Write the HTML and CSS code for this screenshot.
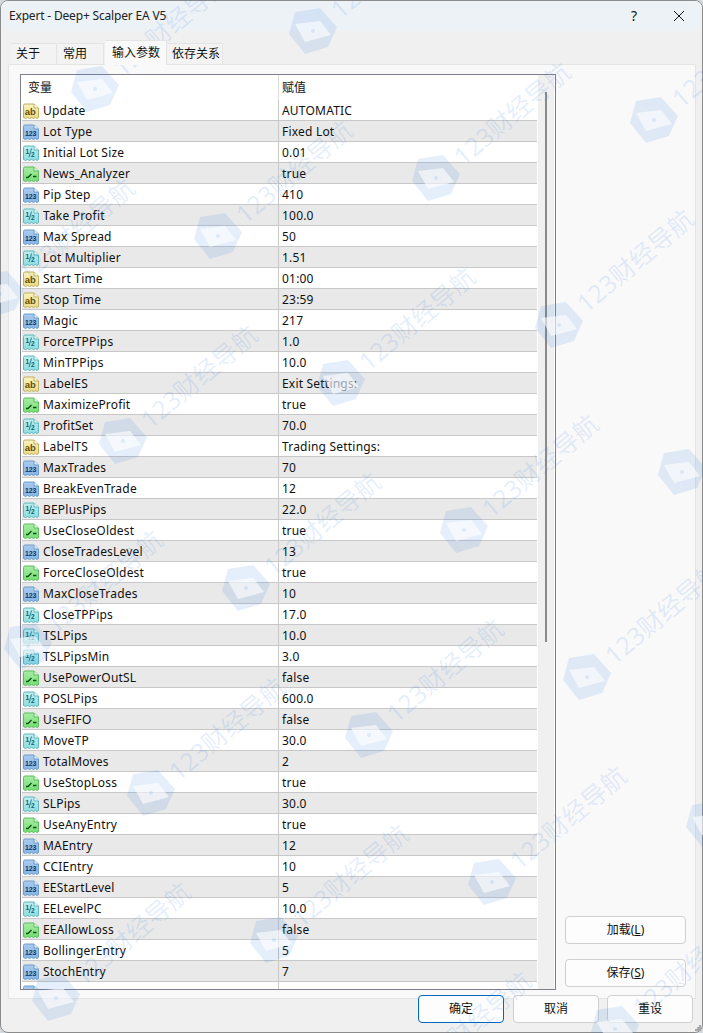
FILE: index.html
```html
<!DOCTYPE html>
<html lang="zh">
<head>
<meta charset="utf-8">
<title>Expert - Deep+ Scalper EA V5</title>
<link rel="stylesheet" href="styles.css">
</head>
<body>
<svg class="defs" width="0" height="0" aria-hidden="true">
  <defs>
    <linearGradient id="gy" x1="0" y1="0" x2="0" y2="1"><stop offset="0" stop-color="#fbf3c0"/><stop offset="1" stop-color="#eadb8a"/></linearGradient>
    <linearGradient id="gb" x1="0" y1="0" x2="0" y2="1"><stop offset="0" stop-color="#a9cbee"/><stop offset="1" stop-color="#86b4e6"/></linearGradient>
    <linearGradient id="gt" x1="0" y1="0" x2="0" y2="1"><stop offset="0" stop-color="#bdeef0"/><stop offset="1" stop-color="#8cdde0"/></linearGradient>
    <linearGradient id="gg" x1="0" y1="0" x2="0" y2="1"><stop offset="0" stop-color="#a8eca4"/><stop offset="1" stop-color="#74de74"/></linearGradient>
    <symbol id="i-ab" viewBox="0 0 16 16">
      <path d="M.5 2.500Q.5 1 2 1H11L15.500 5V14.500L14 15.500 12.500 14.500 10.500 15.500 8.500 14.500 6.500 15.500 4.500 14.500 2.500 15.500 .5 14.500Z" fill="url(#gy)" stroke="#bfae5e"/>
      <path d="M11 1V5H15.500" fill="#fffbe0" stroke="#bfae5e"/>
      <text x="1.800" y="11.500" class="ico-t ico-t-ab">ab</text>
    </symbol>
    <symbol id="i-int" viewBox="0 0 16 16">
      <path d="M.5 2.500Q.5 1 2 1H11L15.500 5V14.500L14 15.500 12.500 14.500 10.500 15.500 8.500 14.500 6.500 15.500 4.500 14.500 2.500 15.500 .5 14.500Z" fill="url(#gb)" stroke="#6e9cc8"/>
      <path d="M11 1V5H15.500" fill="#e4f0fc" stroke="#6e9cc8"/>
      <text x="2" y="11.800" class="ico-t ico-t-int">123</text>
    </symbol>
    <symbol id="i-dbl" viewBox="0 0 16 16">
      <path d="M.5 2.500Q.5 1 2 1H11L15.500 5V14.500L14 15.500 12.500 14.500 10.500 15.500 8.500 14.500 6.500 15.500 4.500 14.500 2.500 15.500 .5 14.500Z" fill="url(#gt)" stroke="#62b6bc"/>
      <path d="M11 1V5H15.500" fill="#e8fbfb" stroke="#62b6bc"/>
      <path d="M8.500 3.500 6 12" class="ico-l ico-l-dbl"/>
      <text x="8" y="11.800" class="ico-t ico-t-dbl">2</text>
      <text x="2.600" y="8.500" class="ico-t ico-t-dbl">1</text>
    </symbol>
    <symbol id="i-bool" viewBox="0 0 16 16">
      <path d="M.5 2.500Q.5 1 2 1H11L15.500 5V14.500L14 15.500 12.500 14.500 10.500 15.500 8.500 14.500 6.500 15.500 4.500 14.500 2.500 15.500 .5 14.500Z" fill="url(#gg)" stroke="#5cbc5e"/>
      <path d="M11 1V5H15.500" fill="#e2fbe0" stroke="#5cbc5e"/>
      <path d="M3 11.500H5L8.500 8M10 10.500H13.500" class="ico-l ico-l-bool"/>
    </symbol>
    <symbol id="wm-hex" viewBox="-25 -25 50 50">
      <path d="M-18-19 7-23 24-4 15 16-8 23-24 3Z" class="wm-a"/>
      <path d="M-18-7 7-10 18 4-8 11Z" class="wm-b"/>
      <circle cx="0" cy="0" r="2" class="wm-a"/>
    </symbol>
  </defs>
</svg>

<div class="win">
  <header class="titlebar">
    <span class="title">Expert - Deep+ Scalper EA V5</span>
    <span class="help">?</span>
    <svg class="close" width="10" height="10" viewBox="0 0 10 10"><path d="M0 0 10 10M10 0 0 10"/></svg>
  </header>

  <nav class="tabs">
    <span class="tab">关于</span>
    <span class="tab">常用</span>
    <span class="tab tab-active">输入参数</span>
    <span class="tab tab-last">依存关系</span>
  </nav>

  <main class="panel">
    <section class="list">
      <div class="grid">
        <div class="head"><span class="hname">变量</span><span class="hval">赋值</span></div>
        <div class="row"><span class="name"><svg class="ico"><use href="#i-ab"/></svg>Update</span><span class="val">AUTOMATIC</span></div>
        <div class="row"><span class="name"><svg class="ico"><use href="#i-int"/></svg>Lot Type</span><span class="val">Fixed Lot</span></div>
        <div class="row"><span class="name"><svg class="ico"><use href="#i-dbl"/></svg>Initial Lot Size</span><span class="val">0.01</span></div>
        <div class="row"><span class="name"><svg class="ico"><use href="#i-bool"/></svg>News_Analyzer</span><span class="val">true</span></div>
        <div class="row"><span class="name"><svg class="ico"><use href="#i-int"/></svg>Pip Step</span><span class="val">410</span></div>
        <div class="row"><span class="name"><svg class="ico"><use href="#i-dbl"/></svg>Take Profit</span><span class="val">100.0</span></div>
        <div class="row"><span class="name"><svg class="ico"><use href="#i-int"/></svg>Max Spread</span><span class="val">50</span></div>
        <div class="row"><span class="name"><svg class="ico"><use href="#i-dbl"/></svg>Lot Multiplier</span><span class="val">1.51</span></div>
        <div class="row"><span class="name"><svg class="ico"><use href="#i-ab"/></svg>Start Time</span><span class="val">01:00</span></div>
        <div class="row"><span class="name"><svg class="ico"><use href="#i-ab"/></svg>Stop Time</span><span class="val">23:59</span></div>
        <div class="row"><span class="name"><svg class="ico"><use href="#i-int"/></svg>Magic</span><span class="val">217</span></div>
        <div class="row"><span class="name"><svg class="ico"><use href="#i-dbl"/></svg>ForceTPPips</span><span class="val">1.0</span></div>
        <div class="row"><span class="name"><svg class="ico"><use href="#i-dbl"/></svg>MinTPPips</span><span class="val">10.0</span></div>
        <div class="row"><span class="name"><svg class="ico"><use href="#i-ab"/></svg>LabelES</span><span class="val">Exit Settings:</span></div>
        <div class="row"><span class="name"><svg class="ico"><use href="#i-bool"/></svg>MaximizeProfit</span><span class="val">true</span></div>
        <div class="row"><span class="name"><svg class="ico"><use href="#i-dbl"/></svg>ProfitSet</span><span class="val">70.0</span></div>
        <div class="row"><span class="name"><svg class="ico"><use href="#i-ab"/></svg>LabelTS</span><span class="val">Trading Settings:</span></div>
        <div class="row"><span class="name"><svg class="ico"><use href="#i-int"/></svg>MaxTrades</span><span class="val">70</span></div>
        <div class="row"><span class="name"><svg class="ico"><use href="#i-int"/></svg>BreakEvenTrade</span><span class="val">12</span></div>
        <div class="row"><span class="name"><svg class="ico"><use href="#i-dbl"/></svg>BEPlusPips</span><span class="val">22.0</span></div>
        <div class="row"><span class="name"><svg class="ico"><use href="#i-bool"/></svg>UseCloseOldest</span><span class="val">true</span></div>
        <div class="row"><span class="name"><svg class="ico"><use href="#i-int"/></svg>CloseTradesLevel</span><span class="val">13</span></div>
        <div class="row"><span class="name"><svg class="ico"><use href="#i-bool"/></svg>ForceCloseOldest</span><span class="val">true</span></div>
        <div class="row"><span class="name"><svg class="ico"><use href="#i-int"/></svg>MaxCloseTrades</span><span class="val">10</span></div>
        <div class="row"><span class="name"><svg class="ico"><use href="#i-dbl"/></svg>CloseTPPips</span><span class="val">17.0</span></div>
        <div class="row"><span class="name"><svg class="ico"><use href="#i-dbl"/></svg>TSLPips</span><span class="val">10.0</span></div>
        <div class="row"><span class="name"><svg class="ico"><use href="#i-dbl"/></svg>TSLPipsMin</span><span class="val">3.0</span></div>
        <div class="row"><span class="name"><svg class="ico"><use href="#i-bool"/></svg>UsePowerOutSL</span><span class="val">false</span></div>
        <div class="row"><span class="name"><svg class="ico"><use href="#i-dbl"/></svg>POSLPips</span><span class="val">600.0</span></div>
        <div class="row"><span class="name"><svg class="ico"><use href="#i-bool"/></svg>UseFIFO</span><span class="val">false</span></div>
        <div class="row"><span class="name"><svg class="ico"><use href="#i-dbl"/></svg>MoveTP</span><span class="val">30.0</span></div>
        <div class="row"><span class="name"><svg class="ico"><use href="#i-int"/></svg>TotalMoves</span><span class="val">2</span></div>
        <div class="row"><span class="name"><svg class="ico"><use href="#i-bool"/></svg>UseStopLoss</span><span class="val">true</span></div>
        <div class="row"><span class="name"><svg class="ico"><use href="#i-dbl"/></svg>SLPips</span><span class="val">30.0</span></div>
        <div class="row"><span class="name"><svg class="ico"><use href="#i-bool"/></svg>UseAnyEntry</span><span class="val">true</span></div>
        <div class="row"><span class="name"><svg class="ico"><use href="#i-int"/></svg>MAEntry</span><span class="val">12</span></div>
        <div class="row"><span class="name"><svg class="ico"><use href="#i-int"/></svg>CCIEntry</span><span class="val">10</span></div>
        <div class="row"><span class="name"><svg class="ico"><use href="#i-int"/></svg>EEStartLevel</span><span class="val">5</span></div>
        <div class="row"><span class="name"><svg class="ico"><use href="#i-dbl"/></svg>EELevelPC</span><span class="val">10.0</span></div>
        <div class="row"><span class="name"><svg class="ico"><use href="#i-bool"/></svg>EEAllowLoss</span><span class="val">false</span></div>
        <div class="row"><span class="name"><svg class="ico"><use href="#i-int"/></svg>BollingerEntry</span><span class="val">5</span></div>
        <div class="row"><span class="name"><svg class="ico"><use href="#i-int"/></svg>StochEntry</span><span class="val">7</span></div>
        <div class="row"><span class="name"><svg class="ico"><use href="#i-int"/></svg></span><span class="val"></span></div>
      </div>
      <div class="scrollbar"><div class="thumb"></div></div>
    </section>
    <aside class="side">
      <button class="btn btn-side">加载(<u>L</u>)</button>
      <button class="btn btn-side">保存(<u>S</u>)</button>
    </aside>
  </main>

  <footer class="foot">
    <button class="btn btn-foot btn-primary">确定</button>
    <button class="btn btn-foot">取消</button>
    <button class="btn btn-foot">重设</button>
  </footer>
</div>

<svg class="grip" width="8" height="8" viewBox="0 0 8 8"><path d="M5 1h2v2H5zM3 3h2v2H3zM5 3h2v2H5zM1 5h2v2H1zM3 5h2v2H3zM5 5h2v2H5z"/></svg>

<svg class="watermark" width="703" height="1033" viewBox="0 0 703 1033" aria-hidden="true">
  <g transform="translate(95 89)"><use href="#wm-hex" x="-25" y="-25" width="50" height="50"/><text class="wm-t" x="28" y="9" transform="rotate(-40)">123财经导航</text></g>
  <g transform="translate(313 31)"><use href="#wm-hex" x="-25" y="-25" width="50" height="50"/><text class="wm-t" x="28" y="9" transform="rotate(-40)">123财经导航</text></g>
  <g transform="translate(0 294)"><use href="#wm-hex" x="-25" y="-25" width="50" height="50"/><text class="wm-t" x="28" y="9" transform="rotate(-40)">123财经导航</text></g>
  <g transform="translate(218 236)"><use href="#wm-hex" x="-25" y="-25" width="50" height="50"/><text class="wm-t" x="28" y="9" transform="rotate(-40)">123财经导航</text></g>
  <g transform="translate(436 178)"><use href="#wm-hex" x="-25" y="-25" width="50" height="50"/><text class="wm-t" x="28" y="9" transform="rotate(-40)">123财经导航</text></g>
  <g transform="translate(654 120)"><use href="#wm-hex" x="-25" y="-25" width="50" height="50"/><text class="wm-t" x="28" y="9" transform="rotate(-40)">123财经导航</text></g>
  <g transform="translate(123 441)"><use href="#wm-hex" x="-25" y="-25" width="50" height="50"/><text class="wm-t" x="28" y="9" transform="rotate(-40)">123财经导航</text></g>
  <g transform="translate(341 383)"><use href="#wm-hex" x="-25" y="-25" width="50" height="50"/><text class="wm-t" x="28" y="9" transform="rotate(-40)">123财经导航</text></g>
  <g transform="translate(559 325)"><use href="#wm-hex" x="-25" y="-25" width="50" height="50"/><text class="wm-t" x="28" y="9" transform="rotate(-40)">123财经导航</text></g>
  <g transform="translate(28 646)"><use href="#wm-hex" x="-25" y="-25" width="50" height="50"/><text class="wm-t" x="28" y="9" transform="rotate(-40)">123财经导航</text></g>
  <g transform="translate(246 588)"><use href="#wm-hex" x="-25" y="-25" width="50" height="50"/><text class="wm-t" x="28" y="9" transform="rotate(-40)">123财经导航</text></g>
  <g transform="translate(464 530)"><use href="#wm-hex" x="-25" y="-25" width="50" height="50"/><text class="wm-t" x="28" y="9" transform="rotate(-40)">123财经导航</text></g>
  <g transform="translate(682 472)"><use href="#wm-hex" x="-25" y="-25" width="50" height="50"/><text class="wm-t" x="28" y="9" transform="rotate(-40)">123财经导航</text></g>
  <g transform="translate(151 793)"><use href="#wm-hex" x="-25" y="-25" width="50" height="50"/><text class="wm-t" x="28" y="9" transform="rotate(-40)">123财经导航</text></g>
  <g transform="translate(369 735)"><use href="#wm-hex" x="-25" y="-25" width="50" height="50"/><text class="wm-t" x="28" y="9" transform="rotate(-40)">123财经导航</text></g>
  <g transform="translate(587 677)"><use href="#wm-hex" x="-25" y="-25" width="50" height="50"/><text class="wm-t" x="28" y="9" transform="rotate(-40)">123财经导航</text></g>
  <g transform="translate(56 998)"><use href="#wm-hex" x="-25" y="-25" width="50" height="50"/><text class="wm-t" x="28" y="9" transform="rotate(-40)">123财经导航</text></g>
  <g transform="translate(274 940)"><use href="#wm-hex" x="-25" y="-25" width="50" height="50"/><text class="wm-t" x="28" y="9" transform="rotate(-40)">123财经导航</text></g>
  <g transform="translate(492 882)"><use href="#wm-hex" x="-25" y="-25" width="50" height="50"/><text class="wm-t" x="28" y="9" transform="rotate(-40)">123财经导航</text></g>
  <g transform="translate(710 824)"><use href="#wm-hex" x="-25" y="-25" width="50" height="50"/><text class="wm-t" x="28" y="9" transform="rotate(-40)">123财经导航</text></g>
  <g transform="translate(397 1087)"><use href="#wm-hex" x="-25" y="-25" width="50" height="50"/><text class="wm-t" x="28" y="9" transform="rotate(-40)">123财经导航</text></g>
  <g transform="translate(615 1029)"><use href="#wm-hex" x="-25" y="-25" width="50" height="50"/><text class="wm-t" x="28" y="9" transform="rotate(-40)">123财经导航</text></g>
</svg>
</body>
</html>
```

FILE: styles.css
```css
* { box-sizing: border-box; }
html, body { margin: 0; padding: 0; }
html { background: #d5dade; }
body {
  position: relative;
  width: 703px;
  height: 1033px;
  overflow: hidden;
  font: 12px/16px "Noto Sans", "Noto Sans CJK SC", sans-serif;
  color: #111;
}
.defs { position: absolute; }

.win {
  display: flex;
  flex-direction: column;
  height: 1033px;
  background: #f0f0f0;
  border: 1px solid #8b8b8b;
  border-radius: 8px;
  overflow: hidden;
}

.titlebar {
  display: flex;
  align-items: center;
  height: 30px;
  flex: none;
  padding: 0 18px 0 8px;
  background: #edf2f7;
}
.title { flex: 1; color: #222; letter-spacing: -.18px; }
.help { width: 12px; margin-right: 34px; text-align: center; font-size: 14px; }
.close { stroke: #111; stroke-width: 1; fill: none; }

.tabs {
  display: flex;
  align-items: flex-end;
  gap: 1px;
  height: 33px;
  flex: none;
  padding-left: 10px;
}
.tab {
  position: relative;
  height: 21px;
  padding: 2px 16px 0 5px;
  background: #f3f3f3;
  border: 1px solid #e4e4e4;
  border-bottom: 0;
  border-left-width: 0;
  border-left-color: transparent;
}
.tab-active {
  z-index: 1;
  height: 25px;
  margin-bottom: -1px;
  padding: 4px 6px 0 7px;
  background: #f9f9f9;
}
.tab-last { padding: 2px 2px 0 4px; }

.panel {
  flex: 1;
  display: flex;
  min-height: 0;
  margin: 0 6px 0 7px;
  padding: 9px 0 8px 11px;
  background: #f9f9f9;
  border: 1px solid #e4e4e4;
}

.list {
  display: flex;
  width: 536px;
  height: 916px;
  flex: none;
  overflow: hidden;
  background: #fff;
  border: 1px solid #7f7f8c;
  padding-left: 1px;
}
.grid { width: 515px; flex: none; overflow: hidden; }
.head {
  display: flex;
  height: 25px;
  line-height: 26px;
}
.hname { width: 257px; padding-left: 6px; border-right: 1px solid #dcdcdc; }
.hval { padding-left: 3px; }
.row {
  display: flex;
  height: 21px;
  line-height: 18px;
  letter-spacing: .2px;
  border-bottom: 1px solid #c8c8c8;
}
.row:nth-child(odd) { background: #e9e9e9; }
.name {
  display: flex;
  align-items: center;
  width: 257px;
  padding: 2px 0 0 1px;
  border-right: 1px solid #c8c8c8;
}
.val { padding: 2px 0 0 3px; }
.ico { width: 16px; height: 16px; margin-right: 4px; flex: none; }
.ico-t { font-family: "Liberation Sans", sans-serif; font-weight: 700; letter-spacing: 0; }
.ico-t-ab { font-size: 9.500px; fill: #5f500c; }
.ico-t-int { font-size: 7px; letter-spacing: -.2px; fill: #10365f; }
.ico-t-dbl { font-size: 6.500px; fill: #14606a; }
.ico-l { fill: none; stroke-width: 1; }
.ico-l-dbl { stroke: #14606a; stroke-width: .8; }
.ico-l-bool { stroke: #114d14; stroke-width: 1.300; }

.scrollbar {
  flex: none;
  width: 16px;
  margin-left: 1px;
  padding: 17px 0 0 7px;
  background: #f0f0f0;
}
.thumb { width: 2px; height: 550px; background: #8a8a8a; }

.side {
  display: flex;
  flex-direction: column;
  justify-content: flex-end;
  gap: 15px;
  width: 121px;
  margin-left: auto;
  margin-right: 9px;
  padding-bottom: 3px;
}
.btn {
  height: 28px;
  padding: 0;
  font: inherit;
  color: #111;
  background: #fdfdfd;
  border: 1px solid #d0d0d0;
  border-radius: 4px;
}
.btn-side { width: 121px; flex: none; }
.foot {
  display: flex;
  justify-content: flex-end;
  gap: 8px;
  flex: none;
  margin-top: -4px;
  padding: 0 9px 9px 0;
}
.btn-foot { width: 86px; }
.btn-primary { border-color: #0067c0; margin-right: 1px; }

.grip { position: absolute; right: 1px; bottom: 1px; fill: #a8a8a8; }

.watermark { position: absolute; left: 0; top: 0; pointer-events: none; }
.wm-a { fill: rgba(40, 120, 225, .12); }
.wm-b { fill: rgba(255, 255, 255, .6); }
.wm-t {
  font: 25px "Noto Sans", "Noto Sans CJK SC", sans-serif;
  fill: rgba(40, 120, 225, .12);
}
```
